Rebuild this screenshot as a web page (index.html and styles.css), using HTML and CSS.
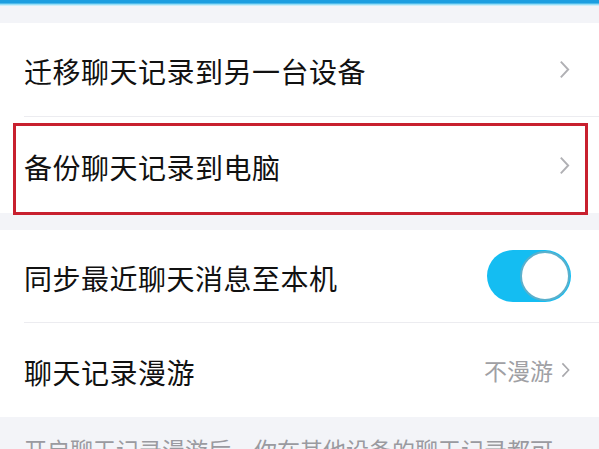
FILE: index.html
```html
<!DOCTYPE html>
<html lang="zh-CN">
<head>
<meta charset="utf-8">
<link rel="stylesheet" href="styles.css">
</head>
<body>
<div class="topbar"></div>
<div class="gap gap-top"></div>
<section class="group">
  <div class="row row-a">
    <div class="row-body">
      <span class="label">迁移聊天记录到另一台设备</span>
      <svg class="chev" viewBox="0 0 10 18" width="11" height="19"><path d="M1.5 1.5 L8.5 9 L1.5 16.5" fill="none" stroke="#b0b0b4" stroke-width="1.8"/></svg>
    </div>
  </div>
  <div class="row row-b">
    <div class="row-body last">
      <span class="label">备份聊天记录到电脑</span>
      <svg class="chev" viewBox="0 0 10 18" width="11" height="19"><path d="M1.5 1.5 L8.5 9 L1.5 16.5" fill="none" stroke="#b0b0b4" stroke-width="1.8"/></svg>
    </div>
    <div class="highlight"></div>
  </div>
</section>
<div class="gap gap-mid"></div>
<section class="group">
  <div class="row row-c">
    <div class="row-body">
      <span class="label">同步最近聊天消息至本机</span>
      <span class="toggle"><span class="knob"></span></span>
    </div>
  </div>
  <div class="row row-d">
    <div class="row-body last">
      <span class="label">聊天记录漫游</span>
      <span class="value">不漫游<svg class="chev small" viewBox="0 0 10 18" width="9" height="16"><path d="M1.5 1.5 L8.5 9 L1.5 16.5" fill="none" stroke="#a8a8ac" stroke-width="1.8"/></svg></span>
    </div>
  </div>
</section>
<div class="footer">开启聊天记录漫游后，你在其他设备的聊天记录都可</div>
</body>
</html>
```
FILE: styles.css
```css
html, body {
  margin: 0;
  padding: 0;
}
body {
  width: 599px;
  height: 449px;
  overflow: hidden;
  background: #f3f4f8;
  font-family: "Noto Sans CJK SC", "Noto Sans", sans-serif;
  color: #111111;
}
.topbar {
  height: 6px;
  background: linear-gradient(#1c9ee0 0, #1c9ee0 3px, #7fd6f5 4px, #e6f6fc 6px);
}
.gap-top {
  height: 17px;
}
.gap-mid {
  height: 17px;
}
.group {
  background: #ffffff;
}
.row {
  position: relative;
  padding-left: 24px;
}
.row-body {
  display: flex;
  align-items: center;
  justify-content: space-between;
  padding-right: 29px;
  border-bottom: 1px solid #ececf0;
}
.row-body.last {
  border-bottom: none;
}
.row-a .row-body { height: 93px; }
.row-b .row-body { height: 96px; }
.row-c .row-body { height: 92px; }
.row-d .row-body { height: 94px; }
.label {
  font-size: 28px;
  letter-spacing: 0.5px;
  line-height: 1;
  padding-top: 3px;
}
.chev {
  display: block;
}
.value {
  display: flex;
  align-items: center;
  gap: 8px;
  font-size: 23px;
  color: #a0a0a4;
}
.highlight {
  position: absolute;
  left: 13px;
  right: 11px;
  top: 6px;
  bottom: -2px;
  border: 3px solid #c8202f;
  pointer-events: none;
}
.toggle {
  position: relative;
  display: block;
  width: 84px;
  height: 52px;
  margin-right: -1px;
  border-radius: 26px;
  background: #14bdf2;
}
.knob {
  position: absolute;
  right: 1px;
  top: 1px;
  width: 46px;
  height: 46px;
  border-radius: 50%;
  background: #ffffff;
  border: 2px solid #5bb0cc;
}
.footer {
  padding: 21px 0 0 24px;
  font-size: 23px;
  line-height: 1;
  color: #9a9aa0;
  white-space: nowrap;
}
```
